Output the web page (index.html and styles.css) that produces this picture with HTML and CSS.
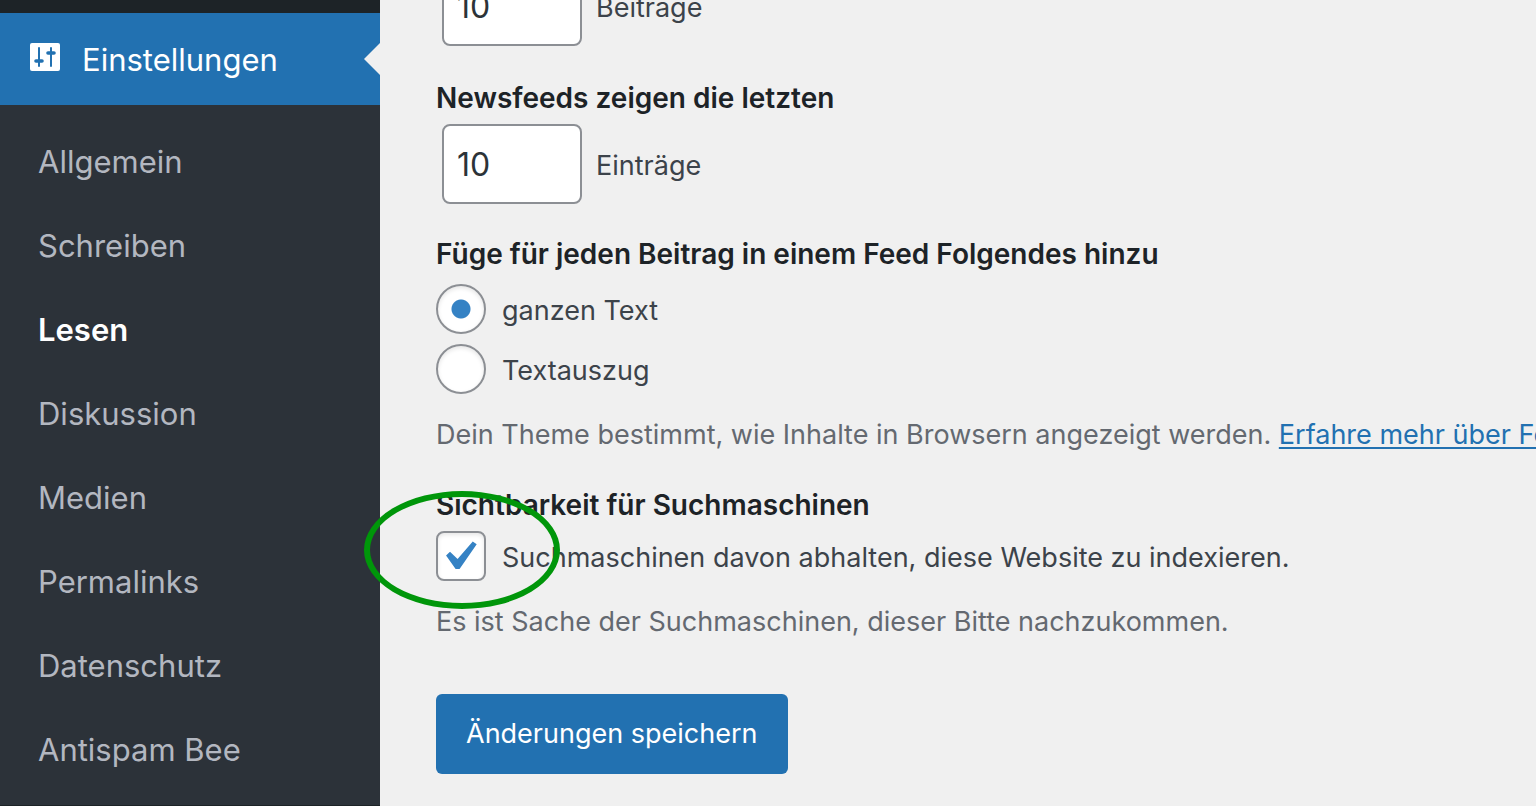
FILE: index.html
```
<!DOCTYPE html>
<html lang="de">
<head>
  <meta charset="UTF-8" />
  <meta name="viewport" content="width=device-width, initial-scale=1">
  <title>Einstellungen › Lesen</title>
  <link rel="stylesheet" href="styles.css">
</head>
<body>
  <div class="wrap">
    <nav class="sidebar" aria-label="Hauptmenü">
      <a class="menu-top" href="#">
        <svg class="menu-icon" viewBox="0 0 30 28" aria-hidden="true">
          <rect width="30" height="28" rx="2" fill="#fff"/>
          <g stroke="#2271b1" stroke-linecap="round" fill="none">
            <path d="M9 5v18M21 5v18" stroke-width="2"/>
            <path d="M6 18h6M18 10h6" stroke-width="3.6"/>
          </g>
        </svg>
        Einstellungen
      </a>
      <ul class="submenu">
        <li><a href="#">Allgemein</a></li>
        <li><a href="#">Schreiben</a></li>
        <li><a class="current" href="#" aria-current="page">Lesen</a></li>
        <li><a href="#">Diskussion</a></li>
        <li><a href="#">Medien</a></li>
        <li><a href="#">Permalinks</a></li>
        <li><a href="#">Datenschutz</a></li>
        <li><a href="#">Antispam Bee</a></li>
      </ul>
    </nav>

    <main class="content">
      <form class="settings">
        <div class="number-row">
          <input type="text" inputmode="numeric" id="posts" value="10">
          <label for="posts">Beiträge</label>
        </div>

        <section>
          <h2>Newsfeeds zeigen die letzten</h2>
          <div class="number-row">
            <input type="text" inputmode="numeric" id="feeds" value="10">
            <label for="feeds">Einträge</label>
          </div>
        </section>

        <section>
          <h2>Füge für jeden Beitrag in einem Feed Folgendes hinzu</h2>
          <div class="choices">
            <div class="choice">
              <input type="radio" name="feed" id="full" checked>
              <label for="full">ganzen Text</label>
            </div>
            <div class="choice">
              <input type="radio" name="feed" id="excerpt">
              <label for="excerpt">Textauszug</label>
            </div>
          </div>
          <p class="description">Dein Theme bestimmt, wie Inhalte in Browsern angezeigt werden. <a href="#">Erfahre mehr über Feeds</a></p>
        </section>

        <section>
          <h2>Sichtbarkeit für Suchmaschinen</h2>
          <div class="choice marked">
            <input type="checkbox" id="noindex" checked>
            <label for="noindex">Suchmaschinen davon abhalten, diese Website zu indexieren.</label>
          </div>
          <p class="description">Es ist Sache der Suchmaschinen, dieser Bitte nachzukommen.</p>
        </section>

        <button type="submit" class="submit">Änderungen speichern</button>
      </form>
    </main>
  </div>
</body>
</html>
```
FILE: styles.css
```
*,
*::after {
  box-sizing: border-box;
}

body {
  margin: 0;
  font-family: Inter, "Liberation Sans", sans-serif;
  font-size: 27px;
  line-height: 40px;
  color: #3c434a;
  background: #f0f0f0;
  overflow: hidden;
}

.wrap {
  display: flex;
  height: 100vh;
}

/* sidebar */
.sidebar {
  flex: 0 0 380px;
  padding-top: 13px;
  background: #1d2327;
  font-size: 31px;
}

.sidebar a {
  text-decoration: none;
}

.menu-top {
  position: relative;
  display: flex;
  align-items: center;
  gap: 22px;
  height: 92px;
  padding: 2px 30px 0;
  background: #2271b1;
  color: #fff;
}

.menu-top::after {
  content: "";
  position: absolute;
  right: 0;
  top: 30px;
  border: 16px solid transparent;
  border-left-width: 0;
  border-right-color: #f0f0f0;
}

.menu-icon {
  width: 30px;
  height: 28px;
  margin-bottom: 6px;
}

.submenu {
  margin: 0;
  padding: 15px 0 13px;
  list-style: none;
  background: #2c3239;
}

.submenu a {
  display: block;
  padding: 0 38px;
  line-height: 84px;
  color: #b3b7c0;
}

.submenu .current {
  color: #fff;
  font-weight: 600;
}

/* settings form */
.content {
  flex: 1;
  min-width: 0;
  padding-left: 56px;
}

/* page is scrolled down, the first row is cut off */
.settings {
  margin-top: -34px;
}

section {
  margin-top: 30px;
}

.number-row + section {
  margin-top: 32px;
}

h2 {
  margin: 0 0 6px;
  font-size: 28px;
  line-height: 40px;
  font-weight: 600;
  color: #1d2327;
}

label {
  padding-top: 4px;
}

.number-row {
  display: flex;
  align-items: center;
  gap: 14px;
  padding-left: 6px;
}

.number-row input {
  width: 140px;
  height: 80px;
  padding: 0 13px;
  border: 2px solid #8c8f94;
  border-radius: 8px;
  background: #fff;
  color: #2c3338;
  font: inherit;
  font-size: 32px;
}

.choices {
  display: grid;
  gap: 10px;
  padding-top: 4px;
}

.choice {
  display: flex;
  align-items: center;
  gap: 16px;
}

.choice input {
  appearance: none;
  flex: none;
  width: 50px;
  height: 50px;
  margin: 0;
  border: 2px solid #8c8f94;
  border-radius: 8px;
  background: #fff;
  box-shadow: inset 0 2px 4px rgba(0, 0, 0, 0.1);
}

.choice input[type="radio"] {
  border-radius: 50%;
}

.choice input[type="radio"]:checked {
  background: radial-gradient(circle, #3582c4 9px, #fff 10px);
}

.choice input[type="checkbox"]:checked {
  background: #fff url("data:image/svg+xml,%3Csvg xmlns='http://www.w3.org/2000/svg' viewBox='0 0 20 20'%3E%3Cpath d='M14.83 4.89l1.34.94-5.81 8.38H9.02L5.78 9.67l1.34-1.25 2.57 2.4z' fill='%233582c4'/%3E%3C/svg%3E") -9px -6px / 59px 59px no-repeat;
}

.marked {
  position: relative;
}

/* green marker around the checkbox */
.marked::after {
  content: "";
  position: absolute;
  left: -72px;
  top: -40px;
  width: 196px;
  height: 118px;
  border: 6px solid #00960a;
  border-radius: 50%;
  pointer-events: none;
}

.description {
  margin: 21px 0 0;
  color: #646970;
  white-space: nowrap;
}

.description a {
  color: #2271b1;
  text-decoration-thickness: 2px;
  text-underline-offset: 3px;
}

.submit {
  height: 80px;
  margin-top: 52px;
  padding: 0 30px;
  border: 0;
  border-radius: 6px;
  background: #2271b1;
  color: #fff;
  font: inherit;
}
```
